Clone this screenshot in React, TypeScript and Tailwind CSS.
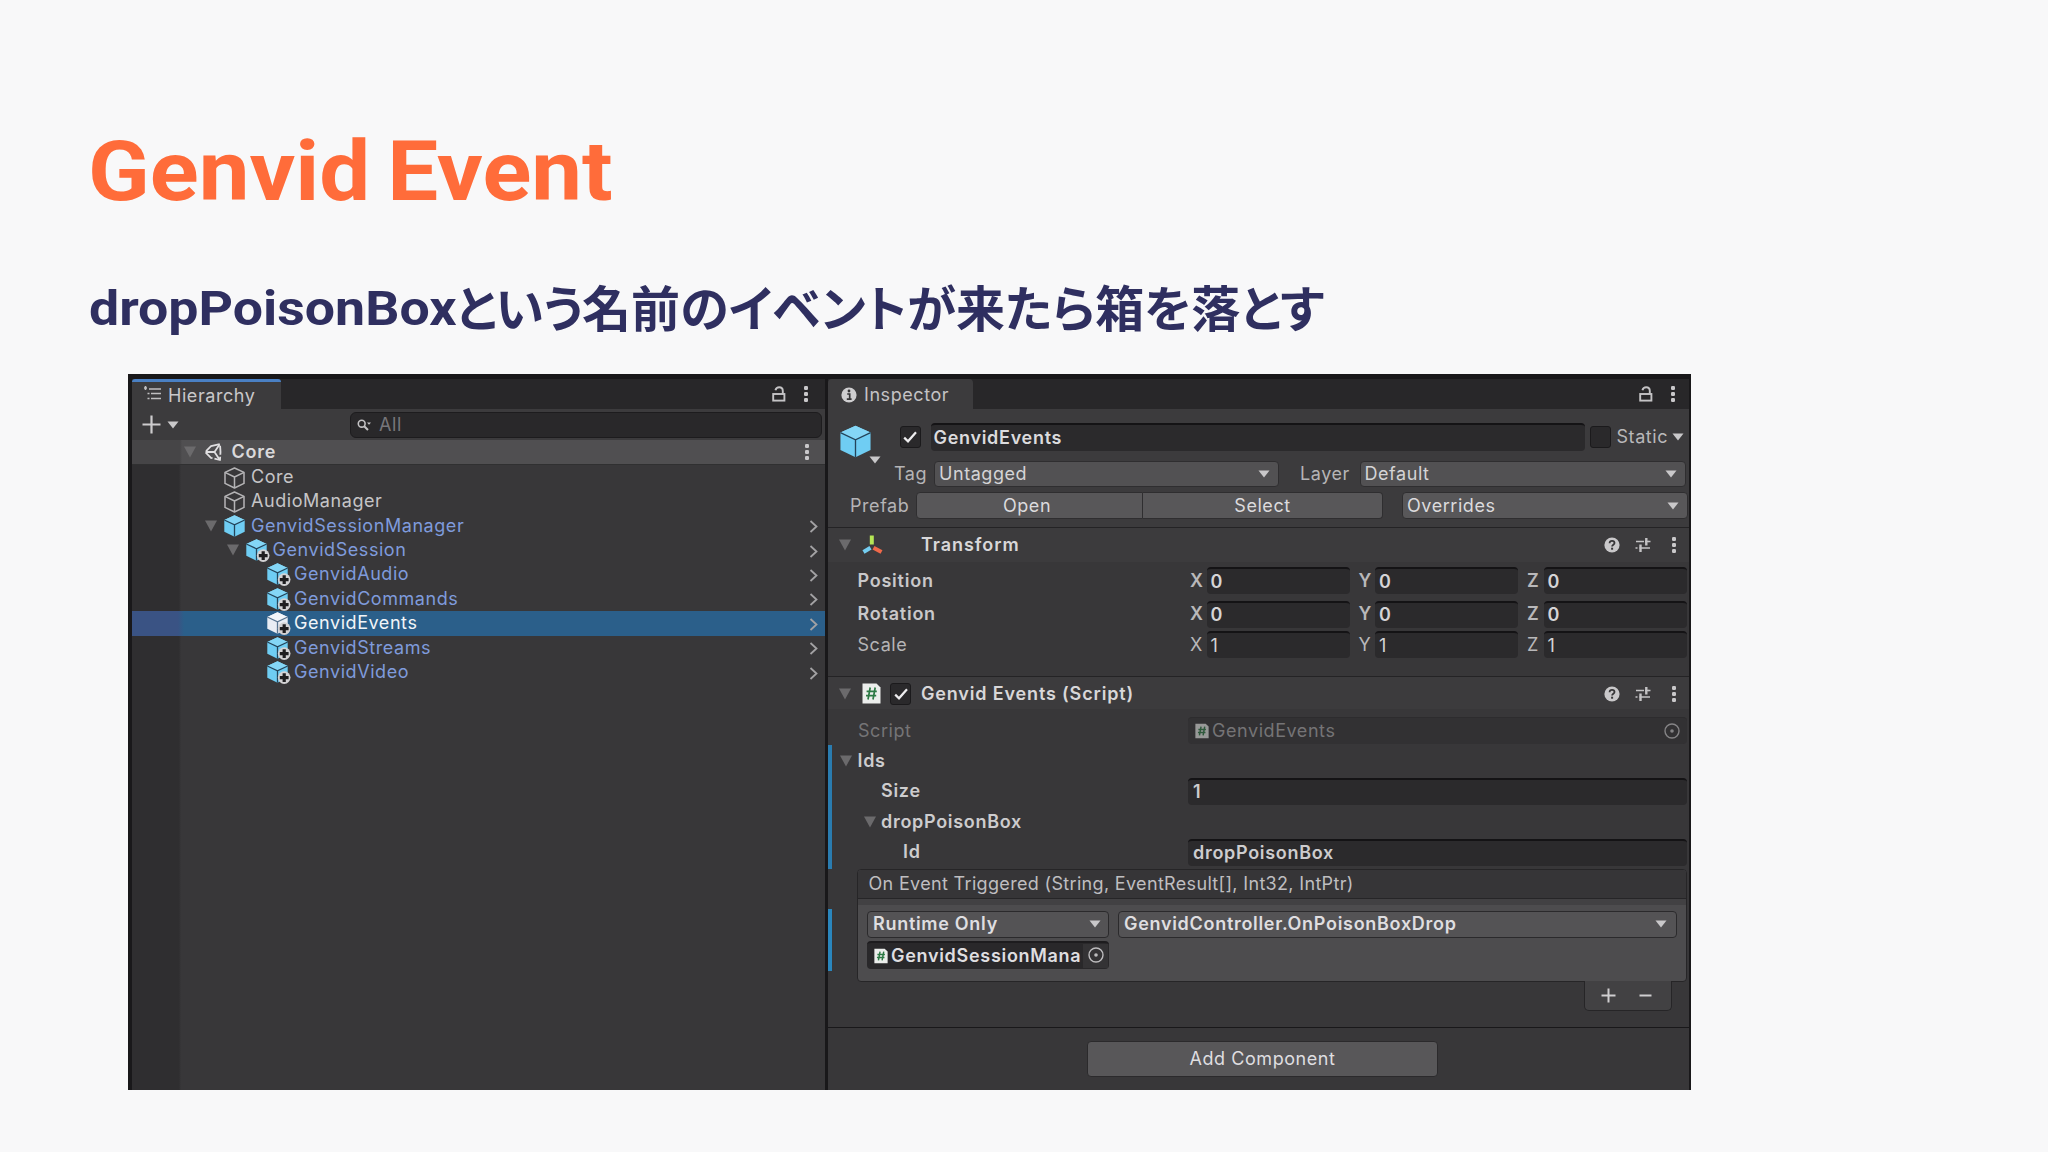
import React from "react";

const FIELD = "rounded-[4px] border-t-2 border-[#141315] bg-[#2b2a2c]";
const BUTTON = "border border-[#2f2e30] bg-[#525153]";
const SEMI = "font-semibold tracking-[0.7px]";

function Dots() {
  return (
    <svg width="6" height="18" viewBox="0 0 6 18" fill="#c9c8ca" className="shrink-0">
      <rect x="1" y="1" width="4" height="4" rx="1.2" />
      <rect x="1" y="7" width="4" height="4" rx="1.2" />
      <rect x="1" y="13" width="4" height="4" rx="1.2" />
    </svg>
  );
}

function Lock() {
  return (
    <svg width="14" height="16" viewBox="0 0 14 16" fill="none" stroke="#c4c3c5" strokeWidth="1.9" className="shrink-0">
      <rect x="1.2" y="8" width="11.2" height="6.6" />
      <path d="M3.4 4.2C4 2.2 5.400 1.300 7.200 1.300c2.200 0 3.600 1.400 3.600 3.600V8" />
    </svg>
  );
}

function Fold({ className = "" }: { className?: string }) {
  return (
    <svg width="12" height="12" viewBox="0 0 12 12" fill="#6b6a6c" className={`shrink-0 ${className}`}>
      <path d="M0 0.5H12L6 11.5Z" />
    </svg>
  );
}

function Caret({ className = "" }: { className?: string }) {
  return (
    <svg width="12" height="8" viewBox="0 0 12 8" fill="#c9c8ca" className={`shrink-0 ${className}`}>
      <path d="M0.5 0.5H11.5L6 7.5Z" />
    </svg>
  );
}

function Check() {
  return (
    <svg width="16" height="16" viewBox="0 0 16 16" fill="none" stroke="#eeedef" strokeWidth="2.2">
      <path d="M2.2 8.600L6 12.300L14 3.200" />
    </svg>
  );
}

function CheckBox({ checked, className = "" }: { checked?: boolean; className?: string }) {
  return (
    <div className={`flex h-[22px] w-[21px] shrink-0 items-center justify-center rounded-[3px] border border-[#1b1a1c] bg-[#2a292b] ${className}`}>
      {checked && <Check />}
    </div>
  );
}

function OutlineCube() {
  return (
    <svg width="21" height="22" viewBox="0 0 21 22" fill="none" stroke="#b5b4b6" strokeWidth="1.5" strokeLinejoin="round" className="shrink-0">
      <path d="M10.5 1L20 5.4V16.4L10.5 21L1 16.4V5.4Z" />
      <path d="M1 5.4L10.5 10L20 5.4M10.5 10V21" />
    </svg>
  );
}

function Cube({ tone = "blue", plus, large }: { tone?: "blue" | "white"; plus?: boolean; large?: boolean }) {
  const face = tone === "blue" ? "#6fcdf3" : "#e9edf4";
  const top = tone === "blue" ? "#84d6f6" : "#f4f6fa";
  const gap = tone === "blue" ? "#24445a" : "#5a7590";
  return (
    <svg width={large ? 31 : 24} height={large ? 33 : 24} viewBox={large ? "0 0 21 22" : "0 0 24 24"} className="shrink-0">
      <path d="M10.5 0.3L20.7 4.9V16.8L10.5 21.7L0.3 16.8V4.9Z" fill={face} />
      <path d="M10.5 0.3L20.7 4.9L10.5 9.8L0.3 4.9Z" fill={top} />
      <path d="M0.3 5L10.5 9.8L20.7 5M10.5 9.8V21.7" fill="none" stroke={gap} strokeWidth={large ? 0.9 : 1.3} />
      {plus && (
        <>
          <circle cx="17.2" cy="16.6" r="6.3" fill="#d3d2d4" />
          <path d="M17.2 12.2V21M12.8 16.6H21.6" stroke="#1f1e20" strokeWidth="3.2" />
        </>
      )}
    </svg>
  );
}

function ScriptIcon({ small, dim }: { small?: boolean; dim?: boolean }) {
  return (
    <svg width={small ? 14 : 19} height={small ? 16 : 21} viewBox="0 0 19 21" className={`shrink-0 ${dim ? "opacity-55" : ""}`}>
      <path d="M0.5 0.5H14.5L18.5 4.5V20.5H0.5Z" fill="#eceeec" />
      <path d="M8.2 4.5L6 16.5M13.2 4.5L11 16.5M4.6 8.4H14.8M4 12.6H14.2" stroke="#2d7a45" strokeWidth={small ? 2 : 1.7} fill="none" />
    </svg>
  );
}

function Target({ dim }: { dim?: boolean }) {
  return (
    <svg width="16" height="16" viewBox="0 0 16 16" fill="none" stroke={dim ? "#858486" : "#bdbcbe"} strokeWidth="1.4" className="shrink-0">
      <circle cx="8" cy="8" r="7" />
      <circle cx="8" cy="8" r="1.8" fill={dim ? "#858486" : "#bdbcbe"} stroke="none" />
    </svg>
  );
}

function HeaderIcons() {
  return (
    <div className="ml-auto flex items-center pr-[12px]">
      <svg width="16" height="16" viewBox="0 0 16 16" className="mr-[15px]">
        <circle cx="8" cy="8" r="7.6" fill="#c9c8ca" />
        <path d="M5.6 6.2C5.6 4.6 6.6 3.8 8 3.8s2.5 0.8 2.5 2.2C10.5 7.6 8.1 7.8 8.1 9.5" fill="none" stroke="#363537" strokeWidth="1.8" />
        <rect x="7.1" y="10.7" width="2" height="2" fill="#363537" />
      </svg>
      <svg width="16" height="16" viewBox="0 0 16 16" stroke="#c4c3c5" fill="none" className="mr-[20px]">
        <path d="M1 4.5H9M13 4.5H15.5M0.5 11H2.5M7 11H15" strokeWidth="1.6" />
        <path d="M11.3 1V8.5M5.5 7.5V15" strokeWidth="2.4" />
        <path d="M10 4.5H13.5M4.5 11H7" strokeWidth="1.6" />
      </svg>
      <Dots />
    </div>
  );
}

type Row = { name: string; indent: string; icon: "outline" | "cube" | "plus"; fold?: boolean; selected?: boolean };

const ROWS: Row[] = [
  { name: "Core", indent: "pl-[73px]", icon: "outline" },
  { name: "AudioManager", indent: "pl-[73px]", icon: "outline" },
  { name: "GenvidSessionManager", indent: "pl-[73px]", icon: "cube", fold: true },
  { name: "GenvidSession", indent: "pl-[94.5px]", icon: "plus", fold: true },
  { name: "GenvidAudio", indent: "pl-[116px]", icon: "plus" },
  { name: "GenvidCommands", indent: "pl-[116px]", icon: "plus" },
  { name: "GenvidEvents", indent: "pl-[116px]", icon: "plus", selected: true },
  { name: "GenvidStreams", indent: "pl-[116px]", icon: "plus" },
  { name: "GenvidVideo", indent: "pl-[116px]", icon: "plus" },
];

function TreeRow({ row }: { row: Row }) {
  const prefab = row.icon !== "outline";
  const color = row.selected ? "text-[#f2f5f8]" : prefab ? "text-[#7f9bdc]" : "text-[#c6c5c7]";
  return (
    <div className={`flex h-[24.45px] items-center ${row.selected ? "bg-[linear-gradient(to_right,#3a5384_46px,#2b5f8a_52px)]" : ""}`}>
      <div className={`flex items-center ${row.indent}`}>
        {row.fold ? <Fold className="mr-[7px]" /> : <div className="w-[19px]" />}
        <div className="flex w-[27px] shrink-0 items-center pt-[2px]">
          {row.icon === "outline" ? <OutlineCube /> : <Cube plus={row.icon === "plus"} tone={row.selected ? "white" : "blue"} />}
        </div>
        <span className={color}>{row.name}</span>
      </div>
      {prefab && (
        <svg width="9" height="13" viewBox="0 0 9 13" fill="none" stroke="#a3a2a4" strokeWidth="1.8" className="mt-[2px] mr-[7px] ml-auto">
          <path d="M1.5 1L7.5 6.5L1.5 12" />
        </svg>
      )}
    </div>
  );
}

function Hierarchy() {
  return (
    <section className="flex w-[693px] shrink-0 flex-col">
      <div className="flex h-[30px] items-stretch bg-[#282729]">
        <div className="flex w-[149px] items-center rounded-t-[3px] border-t-[3px] border-[#4a80c4] bg-[#3c3b3d] pl-[12px] text-[#c9c8ca]">
          <svg width="17" height="15" viewBox="0 0 17 15" stroke="#c0bfc1" strokeWidth="1.6" fill="none" className="mt-[-4px] mr-[7px]">
            <path d="M0 2H3M5 3H17M3.5 7.5H5.5M7 7.5H17M3.5 12.5H5.5M7 12.5H17M1.5 0V4" />
          </svg>
          Hierarchy
        </div>
        <div className="ml-auto flex items-center pr-[16px] pb-px">
          <Lock />
          <div className="w-[17px]" />
          <Dots />
        </div>
      </div>
      <div className="flex h-[31px] items-center bg-[#3c3b3d] pl-[10px]">
        <svg width="19" height="19" viewBox="0 0 19 19" stroke="#cdccce" strokeWidth="2.2">
          <path d="M9.5 0.5V18.5M0.5 9.5H18.5" />
        </svg>
        <Caret className="ml-[6px]" />
        <div className="ml-[171px] flex h-[26px] w-[472px] items-center rounded-[6px] border border-[#1d1c1e] bg-[#29282a] pl-[6px] text-[#77767a]">
          <svg width="15" height="12" viewBox="0 0 15 12" fill="none" stroke="#c4c3c5" strokeWidth="1.6" className="mr-[7px]">
            <circle cx="4.7" cy="4.7" r="3.4" />
            <path d="M7.2 7.2L11 11" strokeWidth="2" />
            <path d="M10 3.5H14L12 5.8Z" fill="#c4c3c5" stroke="none" />
          </svg>
          All
        </div>
      </div>
      <div className="flex h-[24.5px] shrink-0 items-center border-b border-[#303031] bg-[linear-gradient(to_right,#464547_48px,#504f51_50px)] pr-[15px] pl-[52px]">
        <Fold className="mt-px mr-[8px]" />
        <svg width="18" height="18" viewBox="0 0 18 18" fill="none" stroke="#e0dfe1" strokeWidth="1.8" strokeLinejoin="round" className="mr-[9.5px]">
          <path d="M7 3.2L16 1L16.5 9L16 17L7 14.8L1.2 9Z" strokeDasharray="9 2" />
          <path d="M1.5 9H10.5M10.5 9L15.5 1.5M10.5 9L15.5 16.5" />
        </svg>
        <span className="font-semibold tracking-[0.76px] text-[#dad9db]">Core</span>
        <div className="ml-auto mt-px">
          <Dots />
        </div>
      </div>
      <div className="flex-1 bg-[linear-gradient(to_right,#2f2e30_47px,#383739_49px)]">
        {ROWS.map((r) => (
          <TreeRow key={r.name} row={r} />
        ))}
      </div>
    </section>
  );
}

function Axis({ label, value, bold }: { label: string; value: string; bold?: boolean }) {
  return (
    <div className="flex items-center">
      <span className={`w-[16.5px] text-[#b9b8ba] ${bold ? "font-semibold" : ""}`}>{label}</span>
      <div className={`flex h-[27px] w-[143px] items-center pl-[4px] text-[#d5d4d6] ${FIELD} ${bold ? "font-semibold" : ""}`}>{value}</div>
    </div>
  );
}

function Vector({ label, value, bold, className }: { label: string; value: string; bold?: boolean; className: string }) {
  return (
    <div className={`flex h-[27px] items-center pl-[29.5px] ${className}`}>
      <span className={`w-[332.5px] ${bold ? "font-semibold tracking-[0.76px] text-[#c9c8ca]" : "text-[#b5b4b6]"}`}>{label}</span>
      <div className="flex gap-[9px]">
        <Axis label="X" value={value} bold={bold} />
        <Axis label="Y" value={value} bold={bold} />
        <Axis label="Z" value={value} bold={bold} />
      </div>
    </div>
  );
}

function ObjectHeader() {
  return (
    <div className="flex h-[118px] shrink-0 flex-col bg-[#3c3b3d]">
      <div className="flex h-[51.5px]">
        <div className="flex w-[71.5px] pt-[16px] pl-[12px]">
          <Cube large />
          <Caret className="mt-[31px] -ml-[2px]" />
        </div>
        <CheckBox checked className="mt-[17px]" />
        <div className={`mt-[14px] ml-[10px] flex h-[28px] w-[654px] items-center pl-[3px] text-[#dcdbdd] ${FIELD} ${SEMI}`}>GenvidEvents</div>
        <CheckBox className="mt-[17px] ml-[5px]" />
        <span className="mt-[16px] ml-[6px] text-[#b9b8ba]">Static</span>
        <Caret className="mt-[24px] ml-[4px]" />
      </div>
      <div className="flex h-[26px] items-center pl-[66px]">
        <span className="w-[40px] text-[#b5b4b6]">Tag</span>
        <div className={`flex h-[26px] w-[345px] items-center justify-between rounded-[4px] pr-[8px] pl-[4px] text-[#d5d4d6] ${BUTTON}`}>
          Untagged
          <Caret />
        </div>
        <span className="ml-[21px] w-[59.5px] text-[#b5b4b6]">Layer</span>
        <div className={`flex h-[26px] w-[326px] items-center justify-between rounded-[4px] pr-[8px] pl-[4px] text-[#d5d4d6] ${BUTTON}`}>
          Default
          <Caret />
        </div>
      </div>
      <div className="mt-[6px] flex h-[26px] items-center pl-[22px] text-[#dcdbdd]">
        <span className="w-[66px] text-[#b5b4b6]">Prefab</span>
        <div className="flex h-[27px] w-[227px] items-center justify-center rounded-l-[4px] border border-[#2f2e30] bg-[#585759]">
          <span className="-ml-[5px]">Open</span>
        </div>
        <div className="flex h-[27px] w-[240px] items-center justify-center rounded-r-[4px] border border-l-0 border-[#2f2e30] bg-[#585759]">Select</div>
        <div className="ml-[19px] flex h-[27px] w-[286px] items-center justify-between rounded-[4px] border border-[#2f2e30] bg-[#585759] pr-[8px] pl-[4px]">
          Overrides
          <Caret />
        </div>
      </div>
    </div>
  );
}

function Inspector() {
  return (
    <section className="flex w-[861px] flex-col bg-[#383739]">
      <div className="flex h-[30px] shrink-0 items-stretch bg-[#282729]">
        <div className="flex w-[145px] items-center rounded-t-[4px] bg-[#3c3b3d] pt-[2px] pl-[13px] text-[#c4c3c5]">
          <svg width="16" height="16" viewBox="0 0 16 16" className="mr-[7px]">
            <circle cx="8" cy="8" r="7.6" fill="#cfced0" />
            <path d="M6.2 7H8.7V11.8M5.8 12.1H10.6" stroke="#363537" strokeWidth="1.7" fill="none" />
            <circle cx="8" cy="4" r="1.4" fill="#363537" />
          </svg>
          Inspector
        </div>
        <div className="ml-auto flex items-center pr-[13px] pb-px">
          <Lock />
          <div className="w-[17px]" />
          <Dots />
        </div>
      </div>
      <ObjectHeader />
      <div className="flex h-[35px] shrink-0 items-center border-t border-[#242325] bg-[#3c3b3d] pb-px pl-[11px]">
        <Fold />
        <svg width="21" height="20" viewBox="0 0 21 20" fill="none" strokeWidth="4" className="mr-[38px] ml-[11px]">
          <path d="M9.8 0.5V9.5" stroke="#b5e655" />
          <path d="M8.5 12.7L1.5 17" stroke="#74cdf0" />
          <path d="M11.5 12.7L19.5 17" stroke="#f0694a" />
        </svg>
        <span className="font-semibold tracking-[0.95px] text-[#d8d7d9]">Transform</span>
        <HeaderIcons />
      </div>
      <Vector label="Position" value="0" bold className="mt-[5px]" />
      <Vector label="Rotation" value="0" bold className="mt-[6.5px]" />
      <Vector label="Scale" value="1" className="mt-[3.5px]" />
      <div className="mt-[17.5px] flex h-[33px] shrink-0 items-center border-t border-[#242325] bg-[#3c3b3d] pt-[2px] pl-[11px]">
        <Fold />
        <div className="ml-[11px]">
          <ScriptIcon />
        </div>
        <CheckBox checked className="ml-[9px]" />
        <span className="ml-[10px] font-semibold tracking-[0.84px] text-[#d8d7d9]">Genvid Events (Script)</span>
        <HeaderIcons />
      </div>
      <div className="mt-[7.5px] flex h-[29px] shrink-0 items-center pl-[30px] text-[#757476]">
        <span className="w-[330px]">Script</span>
        <div className="flex h-[27px] w-[499px] items-center rounded-[4px] border-t border-[#2d2c2e] bg-[#323133] pr-[7px] pl-[7px]">
          <ScriptIcon small dim />
          <span className="ml-[3px]">GenvidEvents</span>
          <div className="ml-auto">
            <Target dim />
          </div>
        </div>
      </div>
      <div className="flex h-[123.5px] shrink-0">
        <div className="w-[4px] bg-[#2a7cb0]" />
        <div className={`flex flex-1 flex-col text-[#cdccce] ${SEMI}`}>
          <div className="flex h-[31px] items-center pl-[8px]">
            <Fold className="mt-px mr-[5.5px]" />
            Ids
          </div>
          <div className="flex h-[30.5px] items-center pl-[49px]">
            <span className="w-[307px]">Size</span>
            <div className={`flex h-[27px] w-[499px] items-center pl-[5px] ${FIELD}`}>1</div>
          </div>
          <div className="flex h-[30.5px] items-center pl-[32px]">
            <Fold className="mr-[5px]" />
            dropPoisonBox
          </div>
          <div className="flex h-[30px] items-center pl-[71px]">
            <span className="w-[285px]">Id</span>
            <div className={`flex h-[27px] w-[499px] items-center pl-[5px] ${FIELD}`}>dropPoisonBox</div>
          </div>
        </div>
      </div>
      <div className="flex h-[113.5px] shrink-0">
        <div className="mt-[40px] h-[62px] w-[4px] bg-[#2a86bd]" />
        <div className="ml-[25px] flex w-[830px] flex-col overflow-hidden rounded-[4px] border border-[#262527] bg-[#4d4c4e]">
          <div className="flex h-[29.5px] shrink-0 items-center border-b border-[#262527] bg-[#363537] pt-px pl-[10.5px] tracking-[0.33px] text-[#bfbec0]">
            On Event Triggered (String, EventResult[], Int32, IntPtr)
          </div>
          <div className="h-[6px] shrink-0 bg-[#424143]" />
          <div className={`mt-[5.5px] flex pl-[9px] text-[#dfdee0] ${SEMI}`}>
            <div className="flex h-[27px] w-[242px] items-center justify-between rounded-[4px] border border-[#2b2a2c] bg-[#545355] pr-[7px] pl-[5px]">
              Runtime Only
              <Caret />
            </div>
            <div className="ml-[9px] flex h-[27px] w-[559px] items-center justify-between rounded-[4px] border border-[#2b2a2c] bg-[#545355] pr-[9px] pl-[5px]">
              GenvidController.OnPoisonBoxDrop
              <Caret />
            </div>
          </div>
          <div className={`mt-[3px] ml-[9px] flex h-[28px] w-[242px] items-center rounded-[4px] border-t-2 border-[#1d1c1e] bg-[#29282a] pl-[7px] text-[#dfdee0] ${SEMI}`}>
            <ScriptIcon small />
            <span className="ml-[3px] w-[192px]">GenvidSessionMana</span>
            <div className="flex h-[24px] w-[25px] items-center justify-center bg-[#343335] pb-[2px]">
              <Target />
            </div>
          </div>
        </div>
      </div>
      <div className="mr-[17px] -mt-px flex h-[30px] w-[88px] shrink-0 items-center gap-[23.5px] self-end rounded-b-[5px] border border-t-0 border-[#262527] bg-[#424143] pl-[15.5px]">
        <svg width="15" height="15" viewBox="0 0 15 15" stroke="#cfced0" strokeWidth="2">
          <path d="M7.5 0.5V14.5M0.5 7.5H14.5" />
        </svg>
        <svg width="13" height="15" viewBox="0 0 13 15" stroke="#cfced0" strokeWidth="2">
          <path d="M0.5 7.5H12.5" />
        </svg>
      </div>
      <div className="mt-[16px] flex flex-1 items-start justify-center border-t border-[#19181a] pt-[13px] pl-[8px]">
        <div className="flex h-[36px] w-[351px] items-center justify-center rounded-[4px] border border-[#2b2a2c] bg-[#585759] text-[#dfdee0]">Add Component</div>
      </div>
    </section>
  );
}

export default function App() {
  return (
    <main className="flex h-[1152px] w-[2048px] flex-col overflow-hidden bg-[#f8f8f9]">
      <h1 className="mt-[124px] ml-[88px] h-[96px] origin-left scale-x-[1.098] font-['Roboto',sans-serif] text-[82.5px] leading-[96px] font-bold [word-spacing:-5px] whitespace-nowrap text-[#ff6c3a]">Genvid Event</h1>
      <h2 className="mt-[52px] ml-[89px] flex h-[72px] items-center text-[49px] leading-[72px] font-bold whitespace-nowrap text-[#2f2f60]">
        <span className="w-[367px] origin-left translate-y-px scale-x-[1.095] font-['Roboto',sans-serif]">dropPoisonBox</span>
        <span className="-translate-y-[2px] font-['Noto_Sans_CJK_JP',sans-serif] tracking-[0.1px] [font-feature-settings:'palt']">
          <span className="tracking-[-1.3px]">という</span>名前のイベントが来たら箱を落とす
        </span>
      </h2>
      <div className="mt-[30px] ml-[128px] flex h-[716px] w-[1563px] shrink-0 border-t-[5px] border-r-2 border-l-4 border-[#19181a] bg-[#19181a] font-['Inter',sans-serif] text-[18px] leading-[24px] tracking-[0.56px] whitespace-nowrap">
        <Hierarchy />
        <div className="w-[3px] shrink-0" />
        <Inspector />
      </div>
    </main>
  );
}
